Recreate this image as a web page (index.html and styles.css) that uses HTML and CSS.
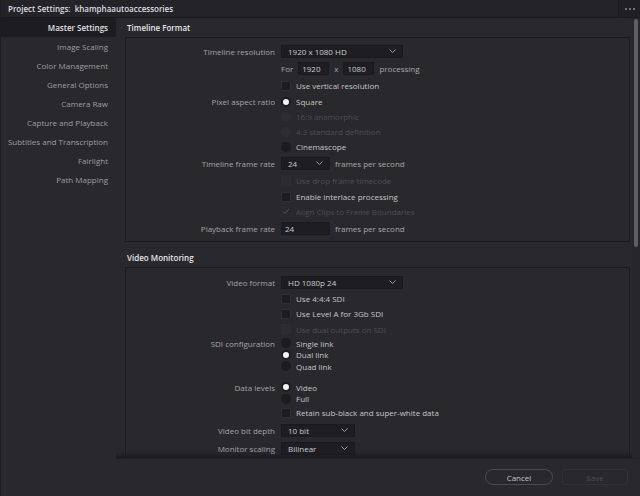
FILE: index.html
```html
<!DOCTYPE html>
<html lang="en">
<head>
<meta charset="utf-8">
<title>Project Settings</title>
<link rel="stylesheet" href="styles.css">
</head>
<body>
<div class="window">
  <header class="titlebar">
    <div class="title">Project Settings:&nbsp; khamphaautoaccessories</div>
    <div class="more"><i></i><i></i><i></i></div>
  </header>
  <div class="body">
    <nav class="sidebar">
      <div class="nav-item active">Master Settings</div>
      <div class="nav-item">Image Scaling</div>
      <div class="nav-item">Color Management</div>
      <div class="nav-item">General Options</div>
      <div class="nav-item">Camera Raw</div>
      <div class="nav-item">Capture and Playback</div>
      <div class="nav-item">Subtitles and Transcription</div>
      <div class="nav-item">Fairlight</div>
      <div class="nav-item">Path Mapping</div>
    </nav>
    <div class="main">
      <div class="scroll">
        <div class="content">
          <section class="section">
            <h2 class="sec-title">Timeline Format</h2>
            <div class="panel p1">
              <div class="row h18">
                <span class="label">Timeline resolution</span>
                <div class="ctl">
                  <div class="sel sel-lg"><span>1920 x 1080 HD</span><svg class="chev" width="7" height="4" viewBox="0 0 7 4"><polyline points="0.5,0.5 3.5,3.5 6.5,0.5" fill="none" stroke="#9a9aa0" stroke-width="1"/></svg></div>
                </div>
              </div>
              <div class="row h17">
                <span class="label"></span>
                <div class="ctl">
                  <span class="txt">For</span>
                  <div class="inp inp-num">1920</div>
                  <span class="txt">x</span>
                  <div class="inp inp-num">1080</div>
                  <span class="txt">processing</span>
                </div>
              </div>
              <div class="row h17">
                <span class="label"></span>
                <div class="ctl"><span class="cb"></span><span class="opt">Use vertical resolution</span></div>
              </div>
              <div class="row h15">
                <span class="label">Pixel aspect ratio</span>
                <div class="ctl"><span class="rd on"></span><span class="opt">Square</span></div>
              </div>
              <div class="row h15">
                <span class="label"></span>
                <div class="ctl"><span class="rd dis"></span><span class="opt dis">16:9 anamorphic</span></div>
              </div>
              <div class="row h15">
                <span class="label"></span>
                <div class="ctl"><span class="rd dis"></span><span class="opt dis">4:3 standard definition</span></div>
              </div>
              <div class="row h15">
                <span class="label"></span>
                <div class="ctl"><span class="rd"></span><span class="opt">Cinemascope</span></div>
              </div>
              <div class="row h18">
                <span class="label">Timeline frame rate</span>
                <div class="ctl">
                  <div class="sel sel-sm"><span>24</span><svg class="chev" width="7" height="4" viewBox="0 0 7 4"><polyline points="0.5,0.5 3.5,3.5 6.5,0.5" fill="none" stroke="#9a9aa0" stroke-width="1"/></svg></div>
                  <span class="txt">frames per second</span>
                </div>
              </div>
              <div class="row h17">
                <span class="label"></span>
                <div class="ctl"><span class="cb dis"></span><span class="opt dis">Use drop frame timecode</span></div>
              </div>
              <div class="row h15">
                <span class="label"></span>
                <div class="ctl"><span class="cb"></span><span class="opt">Enable interlace processing</span></div>
              </div>
              <div class="row h15">
                <span class="label"></span>
                <div class="ctl"><span class="cb dis checked"><svg width="8" height="7" viewBox="0 0 8 7"><polyline points="1,3.5 3,5.5 7,0.8" fill="none" stroke="#55555b" stroke-width="1"/></svg></span><span class="opt dis">Align Clips to Frame Boundaries</span></div>
              </div>
              <div class="row h18">
                <span class="label">Playback frame rate</span>
                <div class="ctl">
                  <div class="inp inp-rate">24</div>
                  <span class="txt">frames per second</span>
                </div>
              </div>
            </div>
          </section>

          <section class="section s2">
            <h2 class="sec-title">Video Monitoring</h2>
            <div class="panel p2">
              <div class="row h18">
                <span class="label">Video format</span>
                <div class="ctl">
                  <div class="sel sel-lg"><span>HD 1080p 24</span><svg class="chev" width="7" height="4" viewBox="0 0 7 4"><polyline points="0.5,0.5 3.5,3.5 6.5,0.5" fill="none" stroke="#9a9aa0" stroke-width="1"/></svg></div>
                </div>
              </div>
              <div class="row h15">
                <span class="label"></span>
                <div class="ctl"><span class="cb"></span><span class="opt">Use 4:4:4 SDI</span></div>
              </div>
              <div class="row h15">
                <span class="label"></span>
                <div class="ctl"><span class="cb"></span><span class="opt">Use Level A for 3Gb SDI</span></div>
              </div>
              <div class="row h16">
                <span class="label"></span>
                <div class="ctl"><span class="cb dis"></span><span class="opt dis">Use dual outputs on SDI</span></div>
              </div>
              <div class="row h12">
                <span class="label">SDI configuration</span>
                <div class="ctl"><span class="rd"></span><span class="opt">Single link</span></div>
              </div>
              <div class="row h11">
                <span class="label"></span>
                <div class="ctl"><span class="rd on"></span><span class="opt">Dual link</span></div>
              </div>
              <div class="row h12">
                <span class="label"></span>
                <div class="ctl"><span class="rd"></span><span class="opt">Quad link</span></div>
              </div>
              <div class="row h12 mt9">
                <span class="label">Data levels</span>
                <div class="ctl"><span class="rd on"></span><span class="opt">Video</span></div>
              </div>
              <div class="row h11">
                <span class="label"></span>
                <div class="ctl"><span class="rd"></span><span class="opt">Full</span></div>
              </div>
              <div class="row h17">
                <span class="label"></span>
                <div class="ctl"><span class="cb"></span><span class="opt">Retain sub-black and super-white data</span></div>
              </div>
              <div class="row h18">
                <span class="label">Video bit depth</span>
                <div class="ctl">
                  <div class="sel sel-md"><span>10 bit</span><svg class="chev" width="7" height="4" viewBox="0 0 7 4"><polyline points="0.5,0.5 3.5,3.5 6.5,0.5" fill="none" stroke="#9a9aa0" stroke-width="1"/></svg></div>
                </div>
              </div>
              <div class="row h18">
                <span class="label">Monitor scaling</span>
                <div class="ctl">
                  <div class="sel sel-md"><span>Bilinear</span><svg class="chev" width="7" height="4" viewBox="0 0 7 4"><polyline points="0.5,0.5 3.5,3.5 6.5,0.5" fill="none" stroke="#9a9aa0" stroke-width="1"/></svg></div>
                </div>
              </div>
              <div class="row h15">
                <span class="label"></span>
                <div class="ctl"><span class="cb"></span></div>
              </div>
            </div>
          </section>
        </div>
        <div class="scrollbar"><div class="thumb"></div></div>
      </div>
      <footer class="footer">
        <button class="btn btn-cancel" type="button">Cancel</button>
        <button class="btn btn-save" type="button" disabled>Save</button>
      </footer>
    </div>
  </div>
</div>
</body>
</html>
```

FILE: styles.css
```css
* { box-sizing: border-box; margin: 0; padding: 0; }

body {
  width: 640px;
  height: 496px;
  overflow: hidden;
  background: #28282d;
  font-family: "Open Sans", "Noto Sans", sans-serif;
  font-size: 8px;
  color: #a6a6aa;
}

.window {
  display: flex;
  flex-direction: column;
  height: 496px;
  border-left: 1px solid #1e1e22;
}

/* title bar */
.titlebar {
  height: 18px;
  flex: none;
  display: flex;
  background: #242428;
  border-bottom: 1px solid #18181b;
}
.title {
  flex: 1;
  padding-left: 7px;
  line-height: 17px;
  font-weight: 600;
  color: #dedee0;
}
.more {
  width: 22px;
  display: flex;
  align-items: center;
  justify-content: center;
  gap: 2px;
  background: #202024;
  border-left: 1px solid #1a1a1d;
}
.more i {
  width: 2px;
  height: 2px;
  border-radius: 1px;
  background: #8c8c92;
}

.body {
  flex: 1;
  display: flex;
  min-height: 0;
}

/* sidebar */
.sidebar {
  width: 115px;
  flex: none;
  display: flex;
  flex-direction: column;
}
.nav-item {
  height: 19px;
  line-height: 19px;
  text-align: right;
  padding-right: 8px;
  color: #9e9ea2;
  white-space: nowrap;
}
.nav-item.active {
  background: #1d1d21;
  color: #e0e0e2;
  font-weight: 600;
}

/* main */
.main {
  flex: 1;
  display: flex;
  flex-direction: column;
  min-width: 0;
}
.scroll {
  height: 441px;
  flex: none;
  display: flex;
  overflow: hidden;
  box-shadow: inset 0 -7px 6px -5px rgba(0, 0, 0, 0.45);
  border-bottom: 1px solid #222226;
}
.content {
  flex: 1;
  min-width: 0;
  padding-right: 2px;
}
.scrollbar {
  width: 8px;
  flex: none;
  padding: 1px 2px 0 2px;
  background: #26262b;
}
.thumb {
  width: 4px;
  height: 228px;
  border-radius: 2px;
  background: #5e5e64;
}

.sec-title {
  height: 19px;
  line-height: 19px;
  padding-left: 11px;
  font-size: 8px;
  font-weight: 600;
  color: #e6e6e8;
}
.s2 { margin-top: 6px; }

.panel {
  margin-left: 9px;
  border: 1px solid #1b1b1f;
}
.p1 { padding: 4px 0; }
.p2 { padding: 5px 0 0; }

.row {
  display: grid;
  grid-template-columns: 149px auto;
  column-gap: 6px;
  align-items: center;
  white-space: nowrap;
}
.h11 { height: 11px; }
.h12 { height: 12px; }
.h15 { height: 15px; }
.h16 { height: 16px; }
.h17 { height: 17px; }
.h18 { height: 18px; }
.mt9 { margin-top: 9px; }

.label {
  text-align: right;
  color: #a4a4a8;
}
.ctl {
  display: flex;
  align-items: center;
  gap: 5px;
}
.txt { color: #a8a8ac; }
.opt { color: #c6c6ca; }
.opt.dis { color: #4e4e54; }

.sel,
.inp {
  height: 13px;
  display: flex;
  align-items: center;
  background: #1e1e22;
  border: 1px solid #1a1a1d;
  color: #cacace;
}
.sel {
  justify-content: space-between;
  padding: 0 6px 0 6px;
}
.sel-lg { width: 122px; }
.sel-md { width: 74px; }
.sel-sm { width: 49px; }
.chev { flex: none; }

.inp { padding: 0 3px; }
.inp-num { width: 31px; }
.inp-rate { width: 49px; }

.cb {
  width: 10px;
  height: 10px;
  flex: none;
  display: flex;
  align-items: center;
  justify-content: center;
  background: #1d1d21;
  border: 1px solid #303035;
  border-radius: 1px;
}
.cb.dis {
  background: #2b2b30;
  border-color: #2e2e33;
}
.cb.checked {
  background: transparent;
  border-color: transparent;
}

.rd {
  width: 10px;
  height: 10px;
  flex: none;
  border-radius: 50%;
  background: #1c1c20;
}
.rd.on {
  background: #f4f4f4;
  border: 2px solid #1c1c20;
}
.rd.dis { background: #2d2d32; }

/* footer */
.footer {
  flex: 1;
  display: flex;
  justify-content: flex-end;
  align-items: flex-start;
  gap: 9px;
  padding: 10px 12px 0 0;
}
.btn {
  height: 16px;
  display: flex;
  align-items: center;
  justify-content: center;
  background: transparent;
  font-family: inherit;
  font-size: 8px;
}
.btn-cancel {
  width: 68px;
  border: 1px solid #4a4a50;
  border-radius: 8px;
  color: #c6c6ca;
}
.btn-save {
  width: 66px;
  border: 1px solid #313136;
  border-radius: 3px;
  color: #4e4e54;
}
```
